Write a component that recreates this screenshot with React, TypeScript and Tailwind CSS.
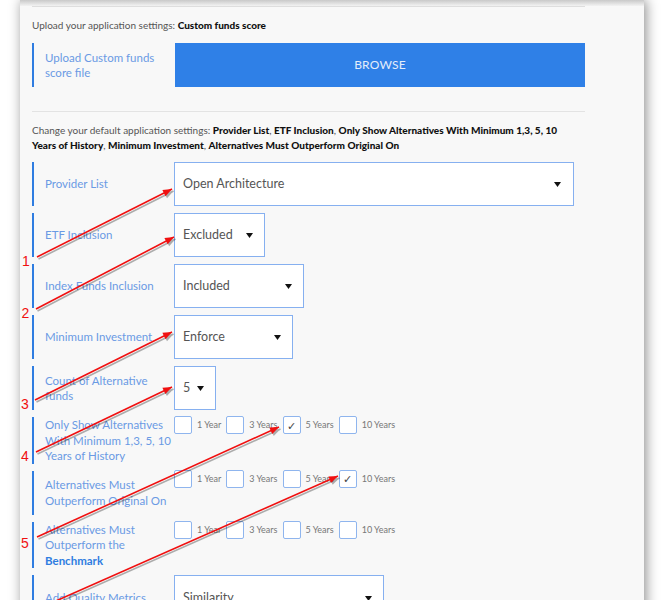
import React from 'react';

const FONT = { fontFamily: 'Lato, "Open Sans", Arial, sans-serif' };

function Caret() {
  return (
    <svg width="7" height="5" viewBox="0 0 7 5" className="shrink-0">
      <polygon points="0,0 7,0 3.5,5" fill="#111" />
    </svg>
  );
}

function Select({ value, className }: { value: string; className: string }) {
  return (
    <div
      className={`h-[44px] bg-white border-[1.5px] border-[#86b0f0] flex items-center justify-between pl-[8px] pr-[11px] text-[12.5px] text-[#555] ${className}`}
    >
      <span className="whitespace-nowrap">{value}</span>
      <Caret />
    </div>
  );
}

function Label({ lines }: { lines: React.ReactNode[] }) {
  return (
    <div className="w-[140px] shrink-0 pl-[11px] self-center text-[11.5px] leading-[15.5px] text-[#6a9ae4]">
      {lines.map((l, i) => (
        <div key={i} className="whitespace-nowrap">
          {l}
        </div>
      ))}
    </div>
  );
}

function Row({ lines, children, start = false }: { lines: React.ReactNode[]; children: React.ReactNode; start?: boolean }) {
  return (
    <div className={`flex min-h-[44px] border-l-2 border-[#2f7de1] mb-[7px] ${start ? 'items-start' : 'items-center'}`}>
      <Label lines={lines} />
      {children}
    </div>
  );
}

function Box({ checked }: { checked?: boolean }) {
  return (
    <div className="w-[18px] h-[18px] bg-white border-[1.5px] border-[#8fb5ee] rounded-[2px] flex items-center justify-center text-[11px] leading-none text-[#444] font-light shrink-0">
      {checked ? '\u2713' : ''}
    </div>
  );
}

const YEARS = ['1 Year', '3 Years', '5 Years', '10 Years'];

function Checks({ on }: { on?: number }) {
  return (
    <div className="flex items-center gap-[5px] -mt-px">
      {YEARS.map((y, i) => (
        <React.Fragment key={y}>
          <Box checked={on === i} />
          <span className="text-[9px] text-[#777] whitespace-nowrap">{y}</span>
        </React.Fragment>
      ))}
    </div>
  );
}

type Arrow = [number, number, number, number];

const ARROWS: Arrow[] = [
  [37, 257, 172, 189],
  [36, 309, 174, 237],
  [35, 400, 172, 332],
  [36, 452, 172, 387],
  [37, 537, 279, 427],
  [40, 608, 338, 476],
];

const NUMBERS: [string, number, number][] = [
  ['1', 26, 266],
  ['2', 25.5, 318],
  ['3', 25, 409],
  ['4', 25, 461],
  ['5', 25, 548],
];

function head(a: Arrow, len = 9, w = 3.5) {
  const [x1, y1, x2, y2] = a;
  const dx = x2 - x1;
  const dy = y2 - y1;
  const L = Math.hypot(dx, dy);
  const ux = dx / L;
  const uy = dy / L;
  const bx = x2 - ux * len;
  const by = y2 - uy * len;
  return `${x2},${y2} ${bx - uy * w},${by + ux * w} ${bx + uy * w},${by - ux * w}`;
}

function Annotations() {
  return (
    <svg className="absolute inset-0 pointer-events-none" width="664" height="600" viewBox="0 0 664 600">
      {ARROWS.map((a, i) => (
        <g key={`s${i}`} transform="translate(1.5,2)" opacity="0.3">
          <line x1={a[0]} y1={a[1]} x2={a[2]} y2={a[3]} stroke="#000" strokeWidth="1.6" />
          <polygon points={head(a)} fill="#000" />
        </g>
      ))}
      {ARROWS.map((a, i) => (
        <g key={`a${i}`}>
          <line x1={a[0]} y1={a[1]} x2={a[2]} y2={a[3]} stroke="#f01010" strokeWidth="1.6" />
          <polygon points={head(a)} fill="#f01010" />
        </g>
      ))}
      {NUMBERS.map(([n, x, y]) => (
        <text
          key={n}
          x={x}
          y={y}
          textAnchor="middle"
          fontSize="14"
          fill="#f01010"
          style={{ fontFamily: '"Liberation Sans", Arial, sans-serif' }}
        >
          {n}
        </text>
      ))}
    </svg>
  );
}

export default function App() {
  return (
    <div className="relative w-[664px] h-[600px] overflow-hidden bg-white" style={FONT}>
      <div className="ml-[20px] w-[624px] h-[640px] bg-[#f8f8f8] shadow-[2px_0_12px_rgba(0,0,0,0.45)]">
        <div className="h-[6px] bg-gradient-to-b from-[#c9c9c9] to-[#f3f3f3]" />
        <div className="ml-3 w-[553px] h-px bg-[#dedede]" />

        <div className="pl-3 w-[565px]">
          <p className="mt-[11px] text-[10px] leading-[15px] text-[#555]">
            Upload your application settings: <b className="font-black text-[#111]">Custom funds score</b>
          </p>

          <div className="mt-[10px] flex items-center h-[44px] border-l-2 border-[#2f7de1]">
            <Label lines={['Upload Custom funds', 'score file']} />
            <div className="ml-px w-[410px] h-[44px] bg-[#2f80e7] flex items-center justify-center text-[12px] text-[#e3edfb] tracking-[0.2px]">
              BROWSE
            </div>
          </div>

          <div className="mt-[24px] w-[553px] h-px bg-[#e3e3e3]" />

          <p className="mt-[11px] text-[10px] leading-[15px] text-[#555]">
            Change your default application settings: <b className="font-black text-[#111]">Provider List</b>,{' '}
            <b className="font-black text-[#111]">ETF Inclusion</b>,{' '}
            <b className="font-black text-[#111]">Only Show Alternatives With Minimum 1,3, 5, 10</b>
            <br />
            <b className="font-black text-[#111]">Years of History</b>,{' '}
            <b className="font-black text-[#111]">Minimum Investment</b>,{' '}
            <b className="font-black text-[#111]">Alternatives Must Outperform Original On</b>
          </p>

          <div className="mt-[9px]">
            <Row lines={['Provider List']}>
              <Select value="Open Architecture" className="w-[400px] pr-[12px]" />
            </Row>
            <Row lines={['ETF Inclusion']}>
              <Select value="Excluded" className="w-[91px]" />
            </Row>
            <Row lines={['Index Funds Inclusion']}>
              <Select value="Included" className="w-[130px]" />
            </Row>
            <Row lines={['Minimum Investment']}>
              <Select value="Enforce" className="w-[119px]" />
            </Row>
            <Row lines={['Count of Alternative', 'funds']}>
              <Select value="5" className="w-[42px]" />
            </Row>
            <Row lines={['Only Show Alternatives', 'With Minimum 1,3, 5, 10', 'Years of History']} start>
              <Checks on={2} />
            </Row>
            <Row lines={['Alternatives Must', 'Outperform Original On']} start>
              <Checks on={3} />
            </Row>
            <Row
              lines={['Alternatives Must', 'Outperform the', <b key="b" className="text-[#2f7de1]">Benchmark</b>]}
              start
            >
              <Checks />
            </Row>
            <Row lines={['Add Quality Metrics']}>
              <Select value="Similarity" className="w-[210px] h-[46px]" />
            </Row>
          </div>
        </div>
      </div>
      <Annotations />
    </div>
  );
}
